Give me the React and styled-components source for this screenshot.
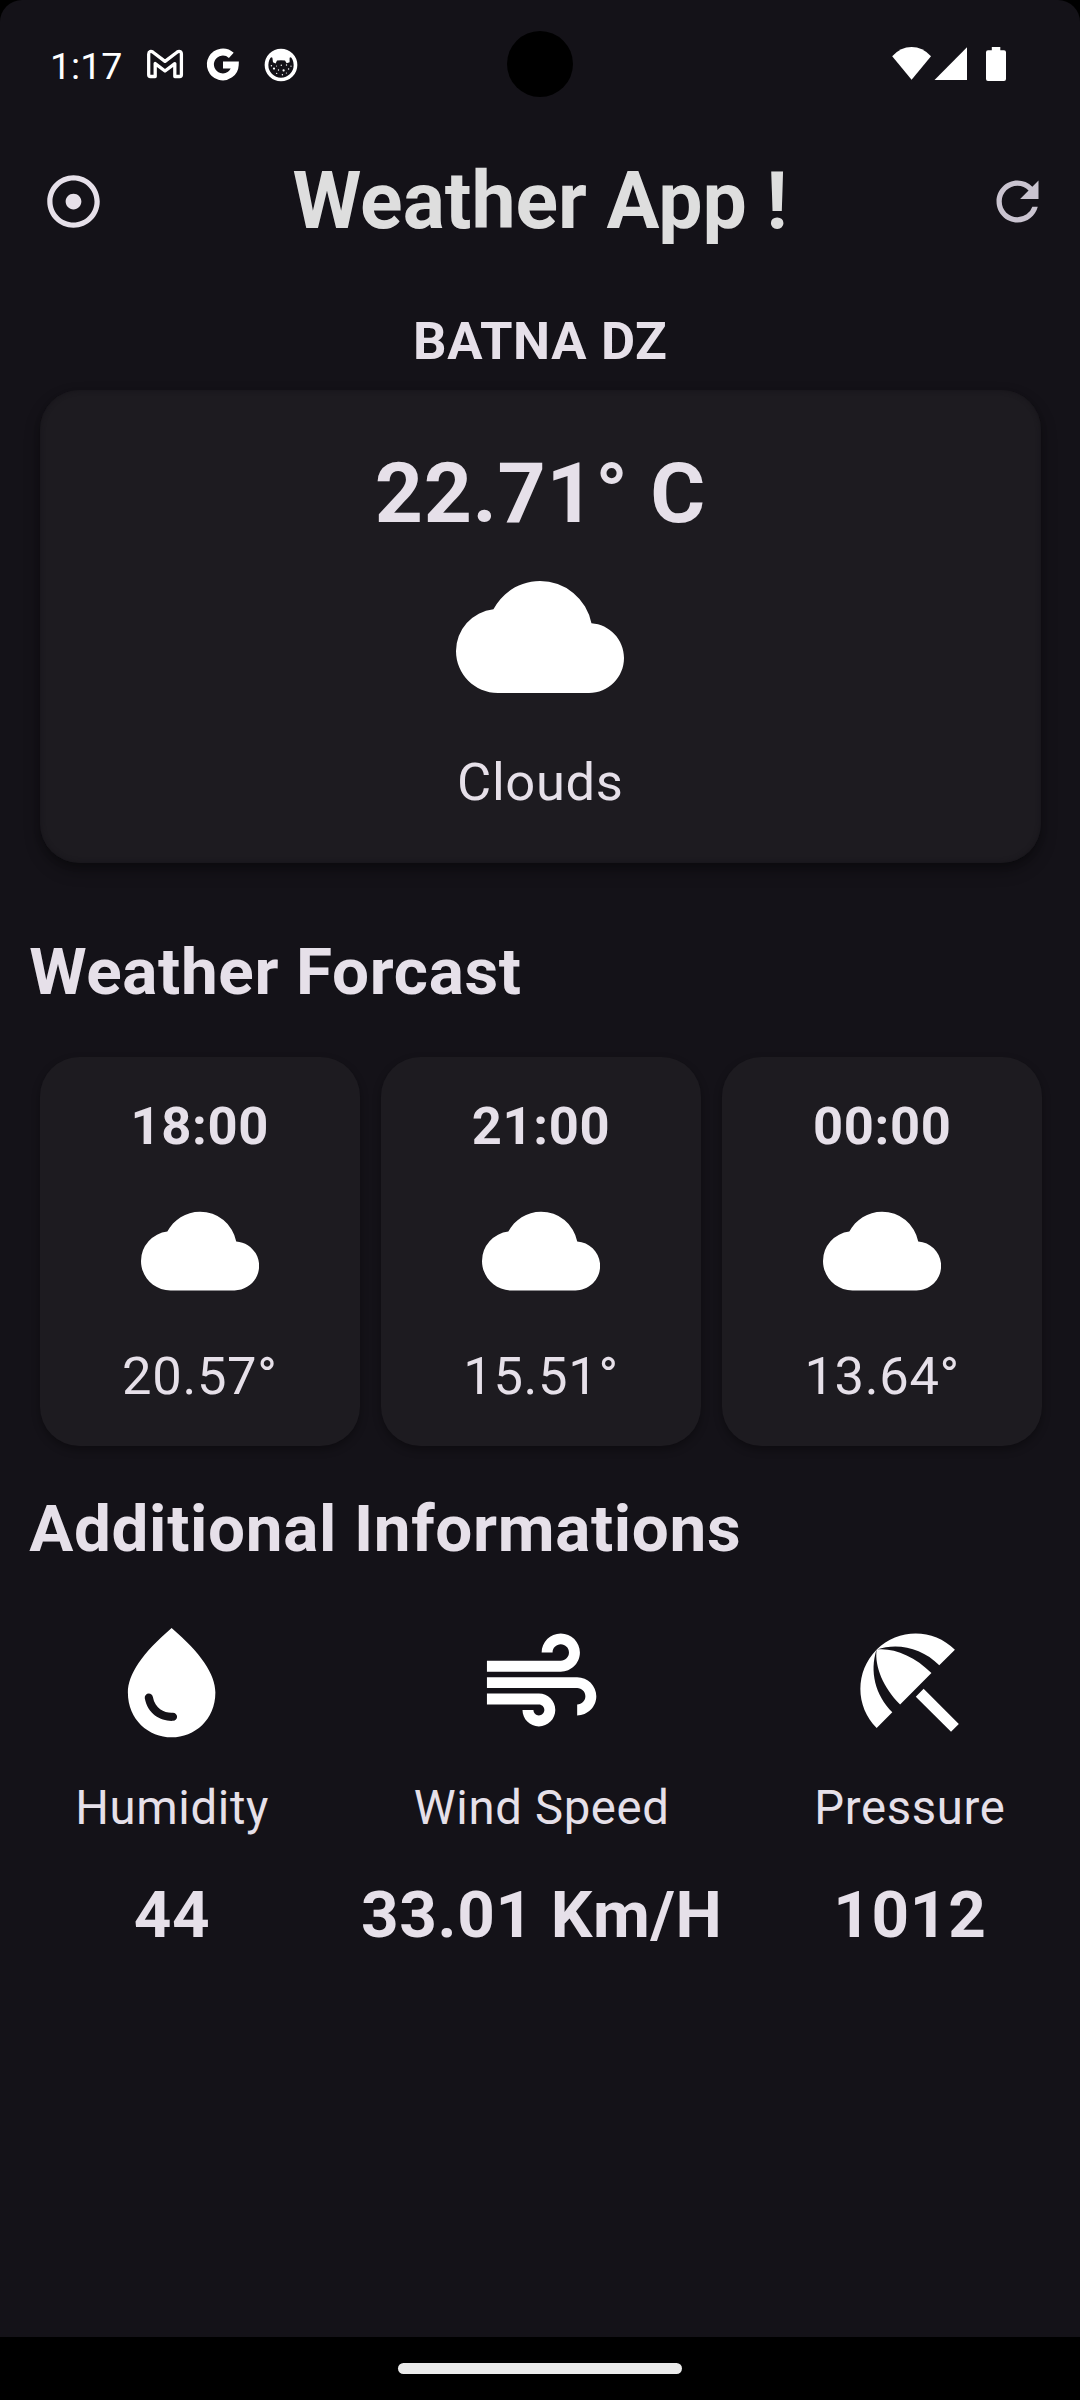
import React from "react";
import styled, { createGlobalStyle } from "styled-components";
import { MdAdjust, MdRefresh, MdCloud, MdWaterDrop, MdAir, MdBeachAccess } from "react-icons/md";

const GlobalStyle = createGlobalStyle`
  html, body { margin: 0; padding: 0; background: #000; }
  *, *::before, *::after { box-sizing: border-box; }
  svg { display: block; flex: none; }
`;

const Screen = styled.div`
  width: 1080px;
  height: 2400px;
  display: flex;
  flex-direction: column;
  overflow: hidden;
  background: #000;
  color: #e6e0e9;
  font-family: Roboto, "Liberation Sans", sans-serif;
  letter-spacing: 0.656px;
`;

const Surface = styled.div`
  flex: 1;
  display: flex;
  flex-direction: column;
  background: #141218;
  border-radius: 22px 22px 0 0;
`;

const StatusBar = styled.header`
  position: relative;
  height: 128px;
  padding: 0 74px 0 50px;
  display: flex;
  justify-content: space-between;
  color: #fff;
`;

const StatusGroup = styled.div`
  display: flex;
  height: 128px;
  align-items: center;
`;

const Clock = styled.span`
  width: 97px;
  font-size: 37.5px;
  line-height: 44px;
  letter-spacing: 0;
  padding-top: 3px;
`;

const Camera = styled.div`
  position: absolute;
  left: 507px;
  top: 31px;
  width: 66px;
  height: 66px;
  border-radius: 50%;
  background: #000;
`;

const AppBar = styled.div`
  height: 147px;
  display: flex;
  align-items: center;
  justify-content: space-between;
  padding: 0 31.5px 0 42px;
`;

const AppTitle = styled.h1`
  margin: 0 10.5px 2px 0;
  color: #dedede;
  font-size: 78.75px;
  line-height: 94px;
  font-weight: 700;
  letter-spacing: 0;
`;

const IconButton = styled.button`
  border: 0;
  padding: 0;
  background: none;
  color: ${(p) => p.$tint};
`;

const Content = styled.main`
  padding: 28px 28.6px 0 29.2px;
`;

const Line = styled.div`
  font-size: ${(p) => p.$size}px;
  line-height: ${(p) => p.$leading}px;
  font-weight: ${(p) => (p.$bold ? 700 : 400)};
  margin-top: ${(p) => p.$gap || 0}px;
  text-align: center;
  white-space: nowrap;
`;

const Card = styled.section`
  display: flex;
  flex-direction: column;
  align-items: center;
  background: #1d1b20;
  color: #e6e0e9;
  border-radius: 39.4px;
`;

const CurrentCard = styled(Card)`
  height: 472.7px;
  margin: 11px 10.5px 0;
  padding-top: 44px;
  box-shadow: inset 0 0 5px #161419, 0 8px 16px rgba(0, 0, 0, 0.32), 0 3px 6px rgba(0, 0, 0, 0.15);
`;

const ForecastRow = styled.div`
  display: flex;
  gap: 21px;
  margin: 38.7px 0 0 10.5px;
`;

const ForecastCard = styled(Card)`
  flex: 0 0 320.2px;
  height: 388.7px;
  padding-top: 31.6px;
  box-shadow: 0 4px 9px rgba(0, 0, 0, 0.32);
`;

const SectionTitle = styled.h2`
  margin: ${(p) => p.$gap}px 0 0;
  font-size: 65.625px;
  line-height: 94px;
  font-weight: 700;
`;

const Glyph = styled.div`
  color: #fff;
  margin-top: ${(p) => p.$gap || 0}px;
`;

const InfoRow = styled.div`
  display: flex;
  justify-content: space-around;
  margin-top: 41.2px;
`;

const InfoItem = styled.div`
  display: flex;
  flex-direction: column;
  align-items: center;
`;

const NavBar = styled.footer`
  height: 63px;
  display: flex;
  justify-content: center;
  align-items: center;
`;

const NavHandle = styled.div`
  width: 284px;
  height: 10.5px;
  border-radius: 6px;
  background: #ebebeb;
`;

const NotificationIcons = () => (
  <svg width="152" height="40" viewBox="147 44 152 40" fill="none">
    <path
      d="M148.7 74.8V54.2C148.7 51.2 151 50.8 153 52.2L165 61.4L177 52.2C179 50.8 181.4 51.2 181.4 54.2V74.8Q181.4 76.5 179.7 76.5H174.8V63.6L165 71L155.2 63.6V76.5H150.4Q148.7 76.5 148.7 74.8Z"
      stroke="#fff"
      strokeWidth="3.3"
      strokeLinejoin="round"
    />
    <path d="M231.3 55.4A12.4 12.4 0 1 0 235.2 65H223" stroke="#fff" strokeWidth="7" />
    <circle cx="281" cy="65" r="14.5" stroke="#fff" strokeWidth="3.7" />
    <path
      d="M267.5 60Q271 49.4 281 49.4T294.5 60L291.5 57L289.6 57.8L289.6 62.2L286.6 63.2L285 60.6Q281 60 277 60.6L275.6 63.4L273 62.2L272.4 57.8L270.5 57Z"
      fill="#fff"
    />
    <g fill="#fff">
      <circle cx="274" cy="68.6" r="1.1" />
      <circle cx="283.6" cy="70.4" r="1.1" />
      <circle cx="281.3" cy="65.3" r="0.7" />
      <circle cx="286.5" cy="65" r="0.7" />
      <circle cx="278.5" cy="70" r="0.7" />
      <circle cx="288.6" cy="69" r="0.7" />
      <circle cx="271.4" cy="65.8" r="0.7" />
      <circle cx="276.7" cy="73.4" r="0.6" />
      <circle cx="282.4" cy="74.8" r="0.7" />
      <circle cx="286.4" cy="73" r="0.6" />
      <circle cx="291" cy="66.2" r="0.6" />
      <circle cx="276.5" cy="66" r="0.5" />
    </g>
  </svg>
);

const SystemIcons = () => (
  <svg width="114" height="38" viewBox="892 45 114 38" fill="#fff">
    <path d="M911.6 79.8L892.2 56.2Q900.6 47 911.6 47T931 56.2Z" />
    <path d="M967 47.3V80H934.5Z" />
    <path d="M991.8 47H1000.3V50.3H1004Q1006 50.3 1006 52.3V79Q1006 81 1004 81H988Q986 81 986 79V52.3Q986 50.3 988 50.3H991.8Z" />
  </svg>
);

const forecast = [
  { time: "18:00", temp: "20.57°" },
  { time: "21:00", temp: "15.51°" },
  { time: "00:00", temp: "13.64°" },
];

const info = [
  { label: "Humidity", value: "44", Icon: MdWaterDrop },
  { label: "Wind Speed", value: "33.01 Km/H", Icon: MdAir },
  { label: "Pressure", value: "1012", Icon: MdBeachAccess },
];

export default function App() {
  return (
    <Screen>
      <GlobalStyle />
      <Surface>
        <StatusBar>
          <StatusGroup>
            <Clock>1:17</Clock>
            <NotificationIcons />
          </StatusGroup>
          <Camera />
          <StatusGroup>
            <SystemIcons />
          </StatusGroup>
        </StatusBar>
        <AppBar>
          <IconButton $tint="#e6e0e9">
            <MdAdjust size={63} />
          </IconButton>
          <AppTitle>Weather App !</AppTitle>
          <IconButton $tint="#cac4d0">
            <MdRefresh size={63} />
          </IconButton>
        </AppBar>
        <Content>
          <Line $size={52.5} $leading={76} $bold>BATNA DZ</Line>
          <CurrentCard>
            <Line $size={84} $leading={119.3} $bold>22.71° C</Line>
            <Glyph><MdCloud size={168} /></Glyph>
            <Line $size={52.5} $leading={75} $gap={23.3}>Clouds</Line>
          </CurrentCard>
          <SectionTitle $gap={62}>Weather Forcast</SectionTitle>
          <ForecastRow>
            {forecast.map((f) => (
              <ForecastCard key={f.time}>
                <Line $size={52.5} $leading={75} $bold>{f.time}</Line>
                <Glyph $gap={27.9}><MdCloud size={118.125} /></Glyph>
                <Line $size={52.5} $leading={75} $gap={29}>{f.temp}</Line>
              </ForecastCard>
            ))}
          </ForecastRow>
          <SectionTitle $gap={35.6}>Additional Informations</SectionTitle>
          <InfoRow>
            {info.map(({ label, value, Icon }) => (
              <InfoItem key={label}>
                <Glyph><Icon size={131.25} /></Glyph>
                <Line $size={47.25} $leading={68} $gap={25.8}>{label}</Line>
                <Line $size={65.625} $leading={94} $gap={25.8} $bold>{value}</Line>
              </InfoItem>
            ))}
          </InfoRow>
        </Content>
      </Surface>
      <NavBar>
        <NavHandle />
      </NavBar>
    </Screen>
  );
}
